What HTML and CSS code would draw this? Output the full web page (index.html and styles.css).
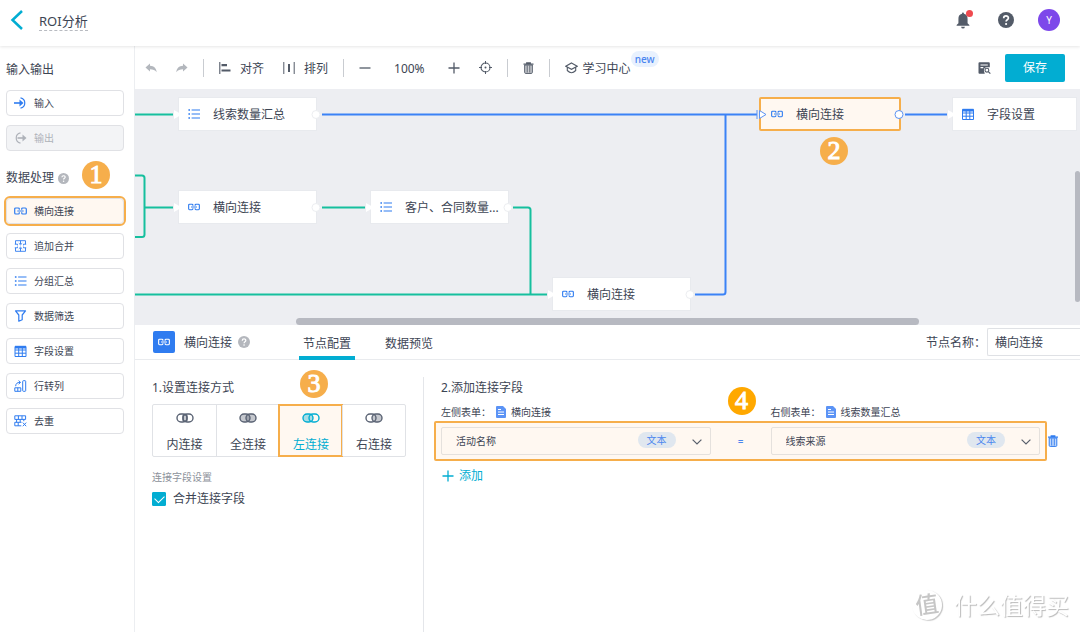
FILE: index.html
```html
<!DOCTYPE html>
<html lang="zh-CN">
<head>
<meta charset="utf-8">
<meta name="viewport" content="width=device-width, initial-scale=1">
<title>ROI分析</title>
<link rel="stylesheet" href="styles.css">
</head>
<body>
<svg class="sprite" aria-hidden="true">
  <symbol id="i-chain" viewBox="0 0 13 8"><path d="M5.300 2.700V2q0-1-1-1H1.700q-1 0-1 1v4q0 1 1 1h2.600q1 0 1-1v-.7M7.700 2.700V2q0-1 1-1h2.600q1 0 1 1v4q0 1-1 1H8.700q-1 0-1-1v-.7M3.300 4h6.400" fill="none" stroke="currentColor" stroke-width="1.200"/></symbol>
  <symbol id="i-list" viewBox="0 0 12 12"><path d="M3.600 2H12M3.600 6H12M3.600 10H12" stroke="currentColor" stroke-width="1.200"/><path d="M.4 2h1.600M.4 6h1.600M.4 10h1.600" stroke="currentColor" stroke-width="1.600"/></symbol>
  <symbol id="i-table" viewBox="0 0 12 12"><path d="M.5 1.500h11v10H.5zM.5 5h11M.5 8.200h11M4.200 3v8.500M7.800 3v8.500" fill="none" stroke="currentColor"/><path d="M.5.8h11v2.700H.5z" fill="currentColor"/></symbol>
  <symbol id="i-doc" viewBox="0 0 10 12"><path d="M0 1a1 1 0 0 1 1-1h6l3 3v8a1 1 0 0 1-1 1H1a1 1 0 0 1-1-1z" fill="#5b93f5"/><path d="M2 3.500h3M2 6h6M2 8.500h6" stroke="#fff"/></symbol>
  <symbol id="i-trash" viewBox="0 0 10 12"><path d="M0 2.200h10M3.200 2V.8h3.600V2" fill="none" stroke="currentColor" stroke-width="1.200"/><path d="M1.200 3v7.400q0 1 1 1h5.600q1 0 1-1V3z" fill="currentColor" fill-opacity=".3" stroke="currentColor"/><path d="M3.700 3.500v7M6.300 3.500v7" stroke="currentColor" stroke-width=".9"/></symbol>
  <symbol id="i-help" viewBox="0 0 16 16"><circle cx="8" cy="8" r="8" fill="currentColor"/><path d="M5.700 6.200C5.700 3.200 10.400 3.300 10.400 6 10.400 7.800 8.100 7.700 8.100 9.600" fill="none" stroke="#fff" stroke-width="1.700"/><circle cx="8.100" cy="12" r="1.100" fill="#fff"/></symbol>
  <symbol id="i-undo" viewBox="0 0 12 10"><path d="M5 .5v2.300c4 .2 6.300 2.500 6.700 6.400C10 7 8.100 6.200 5 6.200v2.300L.5 4.500z" fill="currentColor"/></symbol>
  <symbol id="i-down" viewBox="0 0 10 6"><path d="M.6.6 5 5 9.400.6" fill="none" stroke="currentColor" stroke-width="1.200"/></symbol>
  <symbol id="i-plus" viewBox="0 0 12 12"><path d="M6 .5v11M.5 6h11" stroke="currentColor" stroke-width="1.300"/></symbol>
</svg>

<header class="header">
  <a class="back" href="#" aria-label="返回"><svg width="13" height="20" viewBox="0 0 13 20"><path d="M12 1 2.500 10l9.500 9" fill="none" stroke="currentColor" stroke-width="2.500"/></svg></a>
  <h1 class="title">ROI分析</h1>
  <div class="account">
    <button class="icon-btn bell" aria-label="通知"><svg width="14" height="17" viewBox="0 0 12 16"><path d="M6 .5q.9 0 .9 1.200C9.500 2.200 10.300 4 10.300 6.500v4L12 12.300v.7H0v-.7l1.700-1.800v-4C1.700 4 2.500 2.200 5.100 1.700 5.100.5 5.500.5 6 .5zM4.200 13.800h3.600Q7.600 15.600 6 15.600t-1.800-1.800z" fill="currentColor"/></svg></button>
    <button class="icon-btn" aria-label="帮助"><svg width="16" height="16"><use href="#i-help"/></svg></button>
    <button class="avatar">Y</button>
  </div>
</header>

<div class="app">
  <aside class="sidebar">
    <h2 class="side-title">输入输出</h2>
    <div class="side-list">
      <button class="tool"><svg width="13" height="12" viewBox="0 0 13 12"><path d="M0 6h7" stroke="currentColor" stroke-width="1.600"/><path d="M5.500 2.600 9.500 6l-4 3.400z" fill="currentColor"/><path d="M6.500.8a5.300 5.300 0 0 1 0 10.400" fill="none" stroke="currentColor" stroke-width="1.200"/></svg>输入</button>
      <button class="tool" disabled><svg width="13" height="12" viewBox="0 0 13 12"><path d="M3.500 6h6" stroke="currentColor" stroke-width="1.600"/><path d="M8.500 2.600 12.500 6l-4 3.400z" fill="currentColor"/><path d="M6.500.8a5.300 5.300 0 0 0 0 10.400" fill="none" stroke="currentColor" stroke-width="1.200"/></svg>输出</button>
    </div>
    <div class="side-head">
      <h2 class="side-title">数据处理</h2>
      <svg class="hint" width="11" height="11"><use href="#i-help" width="11" height="11"/></svg>
      <span class="step step-1">1</span>
    </div>
    <div class="side-list">
      <button class="tool tool-marked"><svg width="13" height="8"><use href="#i-chain"/></svg>横向连接</button>
      <button class="tool"><svg width="13" height="12" viewBox="0 0 13 12"><path d="M1.500 4.200V.7h10v3.500M1.500 7.800v3.500h10V7.800M.8 4.200h2.700v1.200M.8 7.800h2.700V6.600M12.200 4.200H9.500v1.200M12.200 7.800H9.500V6.600M6.500.7v3.500M6.500 7.800v3.500M4.800 3.200l1.700 1.600 1.700-1.600M4.800 8.800l1.700-1.600 1.700 1.600" fill="none" stroke="currentColor" stroke-width=".9"/></svg>追加合并</button>
      <button class="tool"><svg width="13" height="12"><use href="#i-list"/></svg>分组汇总</button>
      <button class="tool"><svg width="13" height="12" viewBox="0 0 13 12"><path d="M1.500.9h10L8.200 5v4.800l-3.400 1.400V5z" fill="none" stroke="currentColor" stroke-width="1.200" stroke-linejoin="round"/></svg>数据筛选</button>
      <button class="tool"><svg width="13" height="12"><use href="#i-table"/></svg>字段设置</button>
      <button class="tool"><svg width="13" height="12" viewBox="0 0 13 12"><rect x="8.700" y=".7" width="3" height="10.600" rx=".7" fill="none" stroke="currentColor"/><path d="M.8 7.800h6v3.500h-6zM3.800 7.800v3.500M1.700 6.200Q1.700 2.400 6 2.400M4.600.6l2 1.800-2 1.800" fill="none" stroke="currentColor"/></svg>行转列</button>
      <button class="tool"><svg width="13" height="12" viewBox="0 0 13 12"><path d="M.8.8h10.800v3.600H.8zM4.400.8v3.600M8 .8v3.600M7.500 7.300H.8v3.500h6.500M4.200 7.300v3.500M2.600 4.400v2.900M6.200 4.400v2.900M9.800 4.400v1.800M8.800 7.600l3.400 3.600M12.200 7.600l-3.400 3.600" fill="none" stroke="currentColor"/></svg>去重</button>
    </div>
  </aside>

  <main class="workspace">
    <div class="toolbar">
      <div class="group">
        <button class="icon-btn faded" aria-label="撤销"><svg width="12" height="10"><use href="#i-undo"/></svg></button>
        <button class="icon-btn faded flip" aria-label="重做"><svg width="12" height="10"><use href="#i-undo"/></svg></button>
      </div>
      <span class="sep"></span>
      <div class="group">
        <button class="text-btn"><svg width="12" height="12" viewBox="0 0 12 12"><path d="M.8 0v12" stroke="currentColor" stroke-width="1.100"/><path d="M2.500 3.200H8M2.500 8.500h9" stroke="currentColor" stroke-width="2.200"/></svg><span>对齐</span></button>
        <button class="text-btn"><svg width="12" height="12" viewBox="0 0 12 12"><path d="M.8 0v12M11.200 0v12" stroke="currentColor"/><path d="M6 2v8" stroke="currentColor" stroke-width="2"/></svg><span>排列</span></button>
      </div>
      <span class="sep"></span>
      <div class="group">
        <button class="icon-btn" aria-label="缩小"><svg width="12" height="12" viewBox="0 0 12 12"><path d="M.5 6h11" stroke="currentColor" stroke-width="1.300"/></svg></button>
        <span class="zoom">100%</span>
        <button class="icon-btn" aria-label="放大"><svg width="12" height="12"><use href="#i-plus"/></svg></button>
        <button class="icon-btn" aria-label="定位"><svg width="13" height="13" viewBox="0 0 13 13"><circle cx="6.500" cy="6.500" r="4.500" fill="none" stroke="currentColor" stroke-width="1.100"/><circle cx="6.500" cy="6.500" r="1" fill="currentColor"/><path d="M6.500 0v3M6.500 10v3M0 6.500h3M10 6.500h3" stroke="currentColor"/></svg></button>
      </div>
      <span class="sep"></span>
      <button class="icon-btn" aria-label="删除"><svg width="11" height="12"><use href="#i-trash"/></svg></button>
      <span class="sep"></span>
      <button class="text-btn learn"><svg width="13" height="12" viewBox="0 0 13 12"><path d="M6.500 1 12.200 4.200 6.500 7.300.8 4.200zM2.300 5.500v3q4.200 4.500 8.400 0v-3" fill="none" stroke="currentColor" stroke-width="1.100"/></svg><span>学习中心</span><b class="new">new</b></button>
      <div class="actions">
        <button class="icon-btn" aria-label="查看日志"><svg width="13" height="12" viewBox="0 0 13 12"><path d="M1.500.3h9.300q1 0 1 1v4H8q-2.500 1-2 4l.8 2.400H1.500q-1 0-1-1V1.300q0-1 1-1z" fill="currentColor"/><path d="M2.500 3h7.300M2.500 5.600h2.800" stroke="#fff" stroke-width="1.100"/><circle cx="8.900" cy="8.200" r="1.900" fill="none" stroke="currentColor" stroke-width="1.100"/><path d="m10.300 9.600 2 2" stroke="currentColor" stroke-width="1.200"/></svg></button>
        <button class="save">保存</button>
      </div>
    </div>

    <section class="canvas" aria-label="流程画布">
      <svg class="wires" width="946" height="236" aria-hidden="true">
        <g class="wire-green">
          <path d="M0 25.500h38M0 86.500h7q2.500 0 2.500 2.500v56.500q0 2.500-2.500 2.500H0M9.500 118.500H38M187 118.500h43M378 118.500h15q2.500 0 2.500 2.500v84M0 205.500h412"/>
        </g>
        <g class="wire-blue">
          <path d="M187 25.500h435M560 205.500h28q2.500 0 2.500-2.500V26M770 25.500h42"/>
        </g>
      </svg>
      <div class="node n1"><svg width="12" height="12"><use href="#i-list"/></svg><span>线索数量汇总</span></div>
      <div class="node n2"><svg width="12" height="8"><use href="#i-chain"/></svg><span>横向连接</span></div>
      <div class="node n3"><svg width="12" height="12"><use href="#i-list"/></svg><span>客户、合同数量...</span></div>
      <div class="node n4"><svg width="12" height="8"><use href="#i-chain"/></svg><span>横向连接</span></div>
      <div class="node n5 node-marked"><svg width="12" height="8"><use href="#i-chain"/></svg><span>横向连接</span></div>
      <div class="node n6"><svg width="12" height="12"><use href="#i-table"/></svg><span>字段设置</span></div>
      <svg class="wires" width="946" height="236" aria-hidden="true">
        <g class="ports">
          <path d="M39 21l8 4.500-8 4.500zM39 114l8 4.500-8 4.500zM231 114l8 4.500-8 4.500zM413 201l8 4.500-8 4.500zM813 21l8 4.500-8 4.500z"/>
          <circle cx="181" cy="25.500" r="4"/><circle cx="181" cy="118.500" r="4"/><circle cx="373" cy="118.500" r="4"/><circle cx="555" cy="205.500" r="4"/>
        </g>
        <g class="ports-active">
          <path d="M622 21v9M624.500 21.500l6.500 4-6.500 4z"/><circle cx="764" cy="25.500" r="4"/>
        </g>
      </svg>
      <span class="step step-2">2</span>
      <span class="scroll-x"></span>
      <span class="scroll-y"></span>
    </section>

    <section class="panel">
      <div class="panel-head">
        <span class="panel-icon"><svg width="12" height="8"><use href="#i-chain"/></svg></span>
        <h2 class="panel-title">横向连接</h2>
        <svg class="hint" width="12" height="12"><use href="#i-help"/></svg>
        <div class="tabs" role="tablist">
          <button class="tab" role="tab" aria-selected="true">节点配置</button>
          <button class="tab" role="tab" aria-selected="false">数据预览</button>
        </div>
        <label class="name-label" for="node-name">节点名称：</label>
        <input class="name-input" id="node-name" type="text" value="横向连接">
      </div>

      <div class="panel-body">
        <div class="join-type">
          <h3 class="caption">1.设置连接方式</h3>
          <div class="joins" role="radiogroup" aria-label="连接方式">
            <label class="join"><input type="radio" name="join"><svg width="18" height="10" viewBox="0 0 18 10"><rect x="1" y="1" width="10" height="8" rx="4"/><rect x="7" y="1" width="10" height="8" rx="4"/><rect class="fill" x="7" y="1.500" width="4" height="7" rx="2"/></svg>内连接</label>
            <label class="join"><input type="radio" name="join"><svg width="18" height="10" viewBox="0 0 18 10"><rect class="fill" x="1" y="1" width="10" height="8" rx="4"/><rect class="fill" x="7" y="1" width="10" height="8" rx="4"/></svg>全连接</label>
            <label class="join join-marked"><input type="radio" name="join" checked><svg width="18" height="10" viewBox="0 0 18 10"><rect x="7" y="1" width="10" height="8" rx="4"/><rect class="fill" x="1" y="1" width="10" height="8" rx="4"/></svg>左连接</label>
            <label class="join"><input type="radio" name="join"><svg width="18" height="10" viewBox="0 0 18 10"><rect x="1" y="1" width="10" height="8" rx="4"/><rect class="fill" x="7" y="1" width="10" height="8" rx="4"/></svg>右连接</label>
            <span class="step step-3">3</span>
          </div>
          <p class="note">连接字段设置</p>
          <label class="check"><input type="checkbox" checked>合并连接字段</label>
        </div>

        <div class="join-fields">
          <h3 class="caption indent">2.添加连接字段</h3>
          <div class="sources">
            <span class="source"><label for="left-field">左侧表单：</label><svg width="10" height="12"><use href="#i-doc"/></svg>横向连接</span>
            <span></span>
            <span class="source"><label for="right-field">右侧表单：</label><svg width="10" height="12"><use href="#i-doc"/></svg>线索数量汇总</span>
          </div>
          <div class="pair-row">
            <div class="pair">
              <div class="field"><select id="left-field"><option>活动名称</option></select><span class="kind">文本</span><svg class="arrow" width="10" height="6"><use href="#i-down"/></svg></div>
              <span class="equals">=</span>
              <div class="field"><select id="right-field"><option>线索来源</option></select><span class="kind">文本</span><svg class="arrow" width="10" height="6"><use href="#i-down"/></svg></div>
              <span class="step step-4">4</span>
            </div>
            <button class="icon-btn remove" aria-label="删除字段"><svg width="10" height="12"><use href="#i-trash"/></svg></button>
          </div>
          <button class="add"><svg width="12" height="12"><use href="#i-plus"/></svg>添加</button>
        </div>
      </div>
    </section>
  </main>
</div>

<div class="watermark" aria-hidden="true"><span class="seal">值</span><span>什么值得买</span></div>
</body>
</html>
```

FILE: styles.css
```css
:root {
  --teal: #02add2;
  --blue: #2f7cf0;
  --green: #16bf9e;
  --orange: #f6ae4b;
  --cream: #fff8f1;
  --ink: #3d4554;
  --line: #e4e6ea;
}

* { box-sizing: border-box; }

body {
  margin: 0;
  min-height: 100vh;
  display: flex;
  flex-direction: column;
  background: #fff;
  color: var(--ink);
  font: 12px/16px "Noto Sans", "Noto Sans CJK SC", sans-serif;
}

h1, h2, h3, p { margin: 0; font-size: 12px; font-weight: 400; }

button, input, select { font: inherit; color: inherit; }

button {
  padding: 0;
  border: 0;
  background: none;
  cursor: pointer;
}

svg { display: block; flex: none; }

.sprite { position: absolute; width: 0; height: 0; }

.icon-btn { display: flex; align-items: center; color: #535b68; }

.hint { color: #b4b7bd; }

.step {
  position: absolute;
  width: 28px;
  height: 28px;
  border-radius: 50%;
  background: var(--orange);
  color: #fff;
  font: 26px/28px "Liberation Serif", serif;
  -webkit-text-stroke: 1px #fff;
  text-align: center;
}

/* Header */
.header {
  position: relative;
  z-index: 1;
  display: flex;
  align-items: center;
  height: 46px;
  padding: 0 20px 6px 10px;
  background: #fff;
  box-shadow: 0 1px 3px rgba(0, 0, 0, .1);
}

.back { color: var(--teal); }

.title {
  margin-left: 16px;
  padding-top: 2px;
  border-bottom: 1px dashed #b8bbc1;
  font-size: 13px;
  line-height: 18px;
}

.account {
  display: flex;
  align-items: center;
  gap: 28px;
  margin-left: auto;
}

.bell { position: relative; }

.bell::after {
  content: "";
  position: absolute;
  top: -2px;
  right: -3px;
  width: 7px;
  height: 7px;
  border-radius: 50%;
  background: #ef4a4f;
}

.avatar {
  width: 22px;
  height: 22px;
  margin-left: -4px;
  border-radius: 50%;
  background: #7d48ea;
  color: #fff;
  font-size: 10px;
}

/* Page frame */
.app { flex: 1; display: flex; }

.sidebar {
  flex: none;
  width: 134px;
  padding: 16px 10px 16px 6px;
}

.side-title { line-height: 16px; }

.side-head {
  position: relative;
  display: flex;
  align-items: center;
  gap: 4px;
  margin-top: 19px;
}

.step-1 { left: 76px; top: -9px; }

.side-list {
  display: flex;
  flex-direction: column;
  gap: 9px;
  margin-top: 12px;
}

.tool {
  display: flex;
  align-items: center;
  gap: 7px;
  height: 26px;
  padding-left: 7px;
  border: 1px solid #e0e1e5;
  border-radius: 4px;
  background: #fff;
  font-size: 10px;
}

.tool svg { color: var(--blue); }

.tool:disabled { background: #f3f4f6; color: #aeb2b9; }

.tool:disabled svg { color: #aeb2b9; }

.tool-marked {
  background: var(--cream);
  outline: 2px solid var(--orange);
}

.workspace {
  flex: 1;
  min-width: 0;
  display: grid;
  grid-template-columns: minmax(0, 1fr);
  grid-template-rows: auto minmax(236px, 3fr) minmax(307px, 4fr);
  border-left: 1px solid #eceef1;
}

/* Toolbar */
.toolbar {
  display: flex;
  align-items: center;
  gap: 15px;
  height: 43px;
  padding: 0 15px 0 10px;
}

.group { display: flex; align-items: center; gap: 19px; }

.sep { width: 1px; height: 18px; background: #c9ccd1; }

.faded { color: #b3b7bd; }

.flip { transform: scaleX(-1); }

.text-btn { display: flex; align-items: center; gap: 9px; }

.text-btn svg { color: #535b68; }

.text-btn span, .zoom, .node span { padding-top: 2px; }

.zoom { padding-left: 4px; padding-right: 4px; }

.learn { position: relative; gap: 5px; }

.new {
  position: absolute;
  left: 100%;
  top: -8px;
  padding: 0 4px;
  border-radius: 8px;
  background: #e8f1fe;
  color: #4a85f0;
  font-size: 10px;
  font-weight: 500;
}

.actions {
  display: flex;
  align-items: center;
  gap: 14px;
  margin-left: auto;
}

.save {
  width: 60px;
  height: 28px;
  border-radius: 2px;
  background: var(--teal);
  color: #fff;
}

/* Flow canvas */
.canvas {
  position: relative;
  overflow: hidden;
  background: #edeef2;
}

.wires { position: absolute; left: 0; top: 0; pointer-events: none; }

.wire-green, .wire-blue { fill: none; stroke-width: 2; }

.wire-green { stroke: var(--green); }

.wire-blue { stroke: #3b82f6; }

.ports { fill: #fff; }

.ports circle { stroke: #eceef1; }

.ports-active { fill: #fff; stroke: #5c93f2; stroke-width: 1; }

.node {
  position: absolute;
  display: flex;
  align-items: center;
  gap: 13px;
  width: 139px;
  height: 34px;
  padding-left: 9px;
  border: 1px solid #e8eaee;
  background: #fff;
  white-space: nowrap;
}

.node svg { color: var(--blue); }

.n1 { left: 43px; top: 8px; }
.n2 { left: 43px; top: 101px; }
.n3 { left: 235px; top: 101px; }
.n4 { left: 417px; top: 188px; }
.n5 { left: 624px; top: 8px; width: 142px; height: 34px; }
.n6 { left: 817px; top: 8px; width: 125px; }

.node-marked {
  padding-left: 10px;
  border: 2px solid var(--orange);
  border-radius: 2px;
  background: var(--cream);
}

.step-2 { left: 685px; top: 48px; }

.scroll-x, .scroll-y {
  position: absolute;
  border-radius: 4px;
  background: #b7b9c1;
}

.scroll-x { left: 17%; right: 17%; bottom: 0; height: 7px; }

.scroll-y { right: 0; top: 82px; width: 5px; height: 131px; }

/* Settings panel */
.panel { display: flex; flex-direction: column; }

.panel-head {
  display: flex;
  align-items: center;
  height: 35px;
  padding-left: 18px;
  border-bottom: 1px solid #e9ebee;
}

.panel-icon {
  display: grid;
  place-items: center;
  width: 22px;
  height: 22px;
  border-radius: 2px;
  background: var(--blue);
  color: #fff;
}

.panel-title { margin: 0 6px 0 9px; }

.panel-title, .name-label { padding-top: 2px; }

.tabs {
  display: flex;
  align-self: stretch;
  gap: 26px;
  margin-left: 49px;
}

.tab {
  height: 35px;
  padding: 6px 4px 0;
  border-bottom: 4px solid transparent;
}

.tab[aria-selected="true"] { border-bottom-color: var(--teal); }

.name-label { margin-left: auto; }

.name-input {
  width: 93px;
  height: 28px;
  margin-left: 1px;
  padding: 0 7px;
  border: 1px solid #dfe1e5;
  border-right: 0;
  border-radius: 2px 0 0 2px;
  background: #fff;
}

.panel-body { flex: 1; display: flex; padding-top: 17px; }

.join-type {
  flex: none;
  width: 289px;
  padding: 3px 17px 0;
  border-right: 1px solid var(--line);
}

.joins {
  position: relative;
  display: grid;
  grid-template-columns: repeat(4, 1fr);
  height: 53px;
  margin-top: 8px;
  border: 1px solid #e0e2e6;
  border-radius: 2px;
}

.join {
  display: flex;
  flex-direction: column;
  align-items: center;
  justify-content: space-between;
  padding: 8px 0 3px;
  cursor: pointer;
}

.join + .join { border-left: 1px solid #e0e2e6; }

.join input { position: absolute; opacity: 0; }

.join rect { fill: none; stroke: #596273; stroke-width: 1.4; }

.join .fill { fill: #596273; fill-opacity: .35; }

.join-marked {
  background: var(--cream);
  color: var(--teal);
  outline: 2px solid var(--orange);
  outline-offset: -1px;
}

.join-marked rect { stroke: var(--teal); }

.join-marked .fill { fill: var(--teal); }

.step-3 { left: 147px; top: -35px; }

.note {
  margin-top: 12px;
  color: #8d929b;
  font-size: 10px;
}

.check {
  display: flex;
  align-items: center;
  gap: 7px;
  margin-top: 6px;
}

.check input {
  display: grid;
  place-items: center;
  width: 14px;
  height: 14px;
  margin: 0;
  border-radius: 1px;
  appearance: none;
  background: #fff;
  border: 1px solid var(--teal);
}

.check input:checked { background: var(--teal); }

.check input:checked::after {
  content: "";
  width: 8px;
  height: 5px;
  margin-bottom: 3px;
  border: solid #fff;
  border-width: 0 0 1px 1px;
  transform: rotate(-45deg);
}

.join-fields { flex: 1; min-width: 0; padding: 3px 22px 0 10px; }

.indent { padding-left: 7px; }

.sources, .pair {
  display: grid;
  grid-template-columns: 1fr 60px 1fr;
  align-items: center;
}

.sources {
  margin-top: 8px;
  padding: 0 18px 0 7px;
  font-size: 10px;
}

.source { display: flex; align-items: center; gap: 5px; }

.pair-row { display: flex; align-items: center; gap: 1px; margin-top: 1px; }

.pair {
  position: relative;
  flex: 1;
  height: 40px;
  padding: 0 5px;
  border: 2px solid var(--orange);
  border-radius: 2px;
  background: var(--cream);
  font-size: 10px;
}

.field { position: relative; }

.field select {
  display: block;
  width: 100%;
  height: 28px;
  padding: 0 80px 0 14px;
  border: 1px solid #e5e1dd;
  border-radius: 2px;
  appearance: none;
  background: transparent;
}

.kind {
  position: absolute;
  right: 35px;
  top: 5px;
  width: 38px;
  border-radius: 8px;
  background: #e0e7ef;
  color: #4a86ee;
  text-align: center;
  pointer-events: none;
}

.arrow {
  position: absolute;
  right: 9px;
  top: 12px;
  color: #59606c;
  pointer-events: none;
}

.equals { color: #4a86ee; text-align: center; }

.step-4 {
  left: 50%;
  top: -36px;
  margin-left: -13px;
  background: #ffa800;
}

.remove { color: var(--blue); }

.add {
  display: flex;
  align-items: center;
  gap: 5px;
  margin: 7px 0 0 8px;
  color: var(--teal);
}

/* Watermark */
.watermark {
  position: fixed;
  right: 11px;
  bottom: 10px;
  display: flex;
  align-items: center;
  gap: 12px;
  color: #fff;
  font-size: 23px;
  line-height: 34px;
  text-shadow: 1px 1px 1px #b9b9b9;
  pointer-events: none;
}

.seal {
  width: 30px;
  height: 30px;
  border-radius: 50%;
  box-shadow: 1px 1px 1px #c4c4c4;
  color: #c6c6c6;
  font-size: 23px;
  font-weight: 500;
  line-height: 28px;
  text-align: center;
  text-shadow: none;
  transform: rotate(-8deg);
}
```
